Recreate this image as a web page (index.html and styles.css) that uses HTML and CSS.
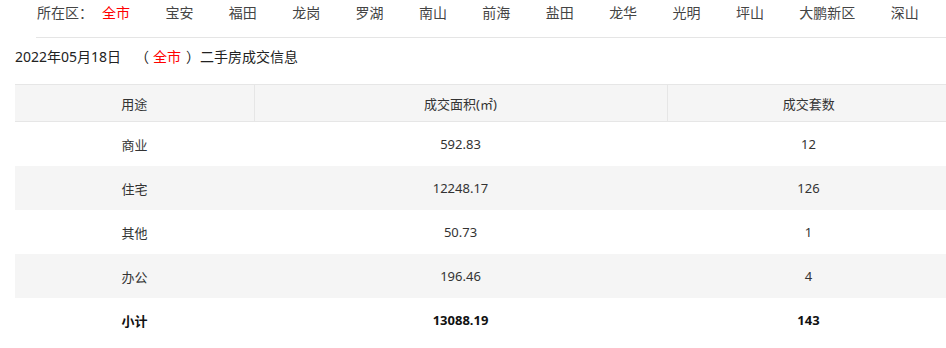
FILE: index.html
```html
<!DOCTYPE html>
<html lang="zh-CN">
<head>
<meta charset="utf-8">
<title>二手房成交信息</title>
<link rel="stylesheet" href="styles.css">
</head>
<body>
<div class="page">
  <div class="district-bar">
    <span class="district-label">所在区：</span>
    <ul class="district-list">
      <li class="active">全市</li>
      <li>宝安</li>
      <li>福田</li>
      <li>龙岗</li>
      <li>罗湖</li>
      <li>南山</li>
      <li>前海</li>
      <li>盐田</li>
      <li>龙华</li>
      <li>光明</li>
      <li>坪山</li>
      <li>大鹏新区</li>
      <li>深山</li>
    </ul>
  </div>
  <h2 class="title">2022年05月18日<span class="paren">（<em class="red">全市</em>）</span>二手房成交信息</h2>
  <table class="deal-table">
    <colgroup>
      <col class="c1"><col class="c2"><col class="c3">
    </colgroup>
    <thead>
      <tr><th>用途</th><th>成交面积(㎡)</th><th>成交套数</th></tr>
    </thead>
    <tbody>
      <tr><td>商业</td><td>592.83</td><td>12</td></tr>
      <tr class="alt"><td>住宅</td><td>12248.17</td><td>126</td></tr>
      <tr><td>其他</td><td>50.73</td><td>1</td></tr>
      <tr class="alt"><td>办公</td><td>196.46</td><td>4</td></tr>
      <tr class="total"><td>小计</td><td>13088.19</td><td>143</td></tr>
    </tbody>
  </table>
</div>
</body>
</html>
```

FILE: styles.css
```css
html, body {
  margin: 0;
  padding: 0;
  overflow: hidden;
  background: #fff;
}
body {
  font-family: "Noto Sans", "Noto Sans CJK SC", sans-serif;
  color: #333;
}
.page {
  padding-left: 15px;
}
.district-bar {
  margin-left: 21px;
  padding-left: 1px;
  height: 37px;
  display: flex;
  align-items: flex-start;
  border-bottom: 1px solid #e5e5e5;
  font-size: 14px;
  line-height: 25px;
  color: #444;
}
.district-label {
  margin-right: 9px;
}
.district-list {
  display: flex;
  gap: 35.4px;
  list-style: none;
  margin: 0;
  padding: 0;
}
.district-list li {
  white-space: nowrap;
}
.district-list .active {
  color: #ff0000;
}
.title {
  margin: 0 0 9px 0;
  font-size: 14px;
  font-weight: normal;
  line-height: 37px;
  color: #222;
}
.paren {
  margin-left: 14px;
}
.red {
  font-style: normal;
  color: #ff0000;
  margin: 0 5px 0 4px;
}
.deal-table {
  width: 935px;
  border-collapse: collapse;
  table-layout: fixed;
  font-size: 13px;
  color: #333;
}
.c1 { width: 239px; }
.c2 { width: 413px; }
.c3 { width: 283px; }
.deal-table th {
  height: 36px;
  padding: 0;
  font-weight: normal;
  background: #f5f5f5;
  border-top: 1px solid #e6e6e6;
  border-bottom: 1px solid #e6e6e6;
  text-align: center;
}
.deal-table th + th {
  border-left: 1px solid #e6e6e6;
}
.deal-table td {
  height: 44px;
  padding: 0;
  text-align: center;
}
.deal-table tr.alt td {
  background: #f5f5f5;
}
.deal-table tr.total td {
  font-weight: bold;
  color: #111;
}
```
